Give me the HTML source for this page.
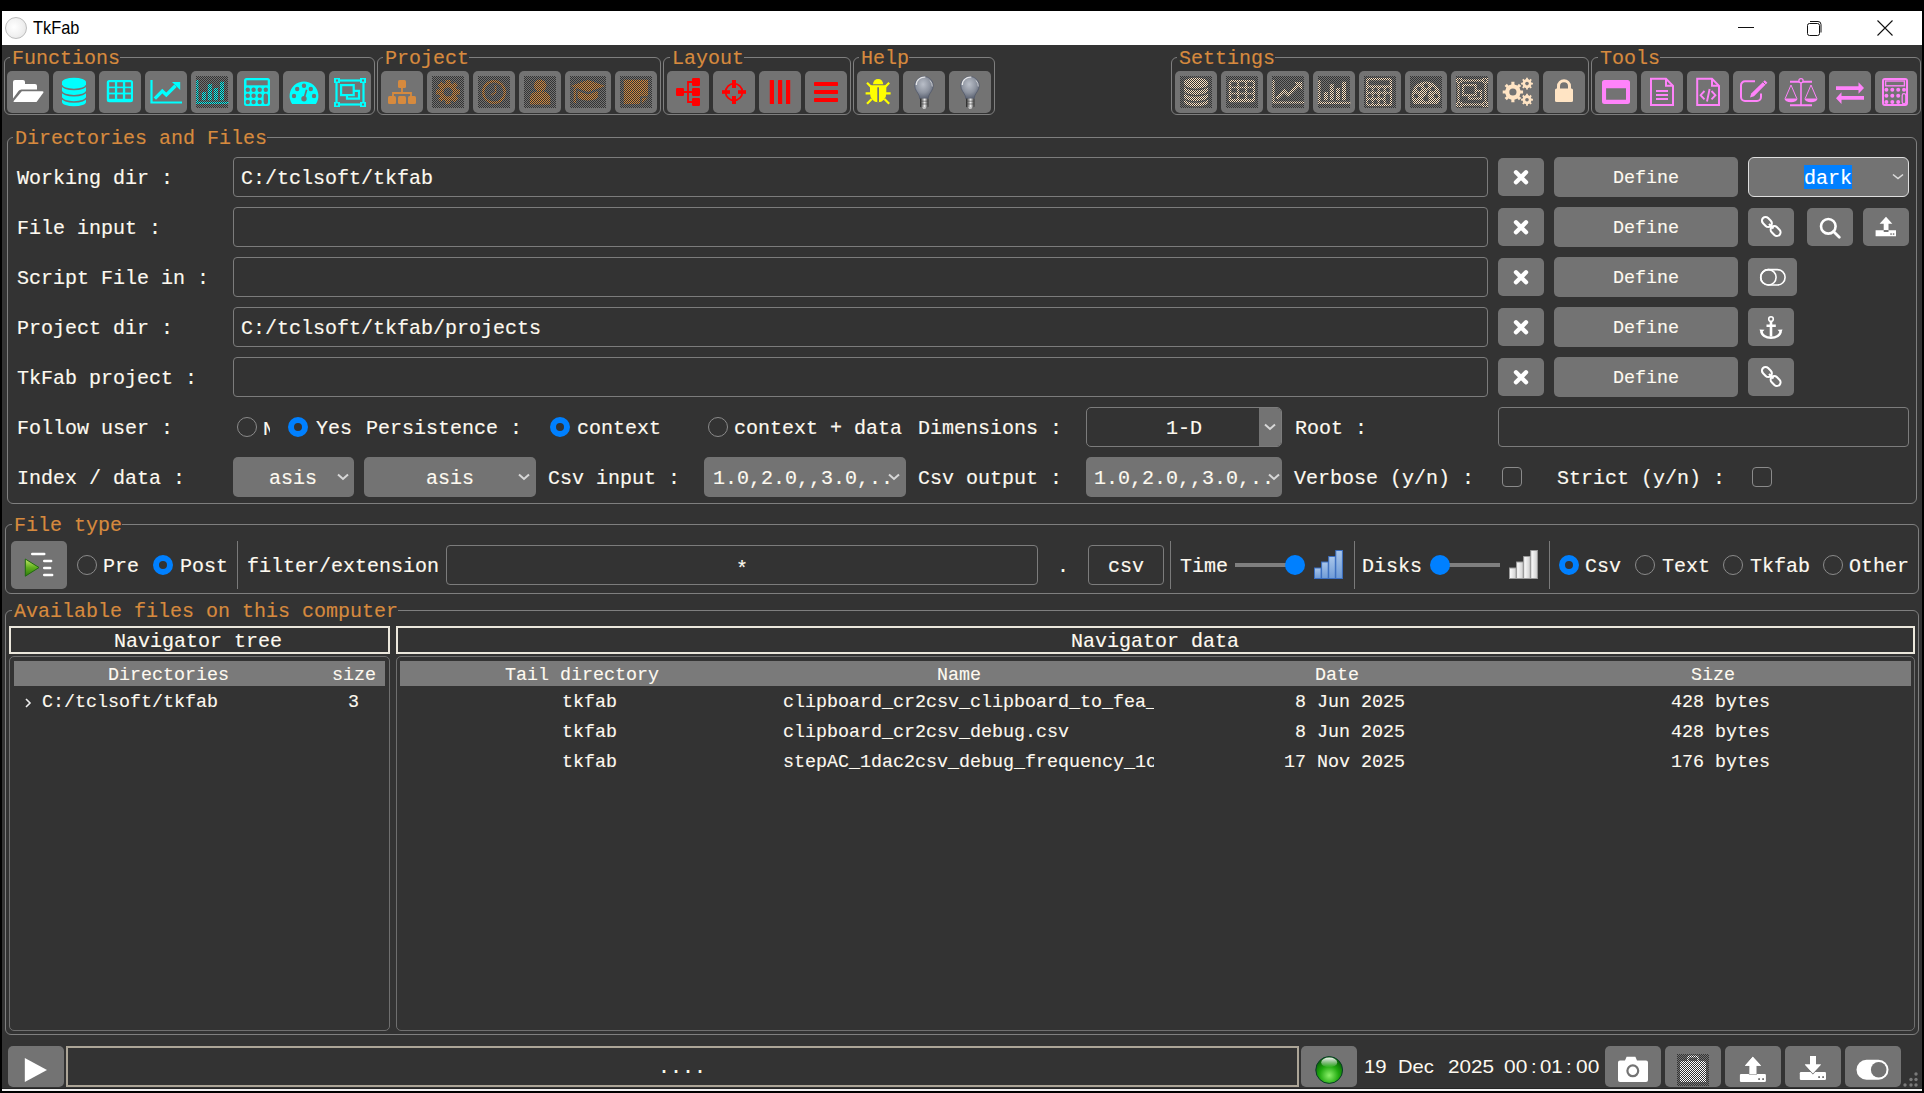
<!DOCTYPE html>
<html><head><meta charset="utf-8">
<style>
*{box-sizing:border-box}
html,body{margin:0;padding:0}
body{width:1924px;height:1093px;background:#000;position:relative;overflow:hidden;font-family:"Liberation Mono",monospace}
.a{position:absolute}
.t{position:absolute;font-size:20px;line-height:20px;color:#fdf9f0;white-space:pre;font-family:"Liberation Mono",monospace;-webkit-text-stroke:0.15px currentColor}
.o{color:#d68a3e;background:#333;padding:0 0 0 2px;margin-left:-2px}
.b{position:absolute;background:#737373;border-radius:5px}
.e{position:absolute;border:1px solid #7c7c7c;border-radius:4px;background:#333}
.f{position:absolute;border:1px solid #7f7f7f;border-radius:6px}
.r{position:absolute;width:20px;height:20px;border-radius:50%;border:1px solid #8a8a8a}
.rs{position:absolute;width:20px;height:20px;border-radius:50%;background:#333;border:6.2px solid #0080ff}
.cb{position:absolute;width:20px;height:20px;border-radius:4px;border:1px solid #8a8a8a}
.sep{position:absolute;width:1px;background:#7a7a7a}
.ic{position:absolute;overflow:visible}
.dis{position:absolute;width:32px;height:32px;background-image:repeating-conic-gradient(#373737 0 25%,transparent 0 50%);background-size:2px 2px}
.tv{position:absolute;font-size:18.33px;line-height:20px;color:#fdf9f0;white-space:pre;font-family:"Liberation Mono",monospace;-webkit-text-stroke:0.12px currentColor}
</style></head><body>
<svg width="0" height="0" style="position:absolute"><defs><pattern id="stip" width="2" height="2" patternUnits="userSpaceOnUse"><rect width="1" height="1" fill="#333"/><rect x="1" y="1" width="1" height="1" fill="#333"/></pattern></defs></svg>
<!-- window -->
<div class="a" style="left:2px;top:11px;width:1920px;height:34px;background:#fff"></div>
<div class="a" style="left:2px;top:45px;width:1920px;height:1046px;background:#333"></div>
<div class="a" style="left:2px;top:1088px;width:1920px;height:1px;background:#262626"></div>
<div class="a" style="left:2px;top:1089px;width:1920px;height:2px;background:#f2f2f2"></div>
<!-- title -->
<div class="a" style="left:5px;top:17px;width:22px;height:22px;border-radius:50%;border:1px solid #bdbdbd;background:radial-gradient(circle at 40% 45%,#fff 0,#f2f2f2 50%,#e0e0e0 100%)"></div>
<div class="a" style="left:33px;top:17px;font:19px/22px 'Liberation Sans',sans-serif;color:#000;transform:scaleX(0.86);transform-origin:0 0">TkFab</div>
<div class="a" style="left:1738px;top:27px;width:16px;height:1px;background:#111"></div>
<svg class="ic" style="left:1805px;top:18px" width="20" height="20" viewBox="0 0 20 20"><rect x="2.5" y="5.5" width="12" height="12" rx="2" fill="none" stroke="#111" stroke-width="1"/><path d="M5 3.5 h8 a3 3 0 0 1 3 3 v8" fill="none" stroke="#111" stroke-width="1"/></svg>
<svg class="ic" style="left:1876px;top:19px" width="18" height="18" viewBox="0 0 18 18"><path d="M1.5 1.5 L16.5 16.5 M16.5 1.5 L1.5 16.5" stroke="#111" stroke-width="1.1"/></svg>

<!-- TOOLBAR FRAMES -->
<div class="f" style="left:4px;top:57px;width:371px;height:58px"></div>
<div class="t o" style="left:12px;top:49px">Functions</div>
<div class="f" style="left:377px;top:57px;width:284px;height:58px"></div>
<div class="t o" style="left:385px;top:49px">Project</div>
<div class="f" style="left:663px;top:57px;width:188px;height:58px"></div>
<div class="t o" style="left:672px;top:49px">Layout</div>
<div class="f" style="left:853px;top:57px;width:142px;height:58px"></div>
<div class="t o" style="left:861px;top:49px">Help</div>
<div class="f" style="left:1171px;top:57px;width:418px;height:58px"></div>
<div class="t o" style="left:1179px;top:49px">Settings</div>
<div class="f" style="left:1591px;top:57px;width:330px;height:58px"></div>
<div class="t o" style="left:1600px;top:49px">Tools</div>
<div class="b" style="left:7px;top:71px;width:42px;height:42px;border-radius:5px"></div><svg class="ic" style="left:7px;top:71px" width="42" height="42" viewBox="0 0 42 42"><path d="M6 11a2 2 0 0 1 2-2h8a2 2 0 0 1 2 2v2h10a2 2 0 0 1 2 2v3.5H14.5a3.5 3.5 0 0 0-3 1.6L6 27.5Z" fill="#ffffff"/><path d="M14.8 20.3H35.5a1 1 0 0 1 .8 1.5L29.5 31H7.2a.7.7 0 0 1-.5-1.1Z" fill="#ffffff"/></svg><div class="b" style="left:53px;top:71px;width:42px;height:42px;border-radius:5px"></div><svg class="ic" style="left:53px;top:71px" width="42" height="42" viewBox="0 0 42 42"><path d="M9 11v19.9a12 4.3 0 0 0 24 0V11a12 4.3 0 0 0-24 0Z" fill="#00ffff"/><path d="M9 14.3a12 4.1 0 0 0 24 0M9 20.6a12 4.1 0 0 0 24 0M9 26.8a12 4.1 0 0 0 24 0" fill="none" stroke="#737373" stroke-width="1.5"/></svg><div class="b" style="left:99px;top:71px;width:42px;height:42px;border-radius:5px"></div><svg class="ic" style="left:99px;top:71px" width="42" height="42" viewBox="0 0 42 42"><rect x="7.8" y="9" width="26.2" height="22.2" rx="2.5" fill="#00ffff"/><rect x="10.2" y="11.2" width="5.7" height="4.4" fill="#737373"/><rect x="18.2" y="11.2" width="5.7" height="4.4" fill="#737373"/><rect x="26.2" y="11.2" width="5.7" height="4.4" fill="#737373"/><rect x="10.2" y="17.2" width="5.7" height="4.4" fill="#737373"/><rect x="18.2" y="17.2" width="5.7" height="4.4" fill="#737373"/><rect x="26.2" y="17.2" width="5.7" height="4.4" fill="#737373"/><rect x="10.2" y="23.4" width="5.7" height="4.4" fill="#737373"/><rect x="18.2" y="23.4" width="5.7" height="4.4" fill="#737373"/><rect x="26.2" y="23.4" width="5.7" height="4.4" fill="#737373"/></svg><div class="b" style="left:145px;top:71px;width:42px;height:42px;border-radius:5px"></div><svg class="ic" style="left:145px;top:71px" width="42" height="42" viewBox="0 0 42 42"><path d="M6.5 9V31.5H37" fill="none" stroke="#00ffff" stroke-width="2.2"/><path d="M9.8 27.6L17.3 20.1l4 3.8l9.2-9.2" fill="none" stroke="#00ffff" stroke-width="3.4"/><path d="M27 10.9H35.2V19.1Z" fill="#00ffff"/></svg><div class="b" style="left:191px;top:71px;width:42px;height:42px;border-radius:5px"></div><svg class="ic" style="left:191px;top:71px" width="42" height="42" viewBox="0 0 42 42"><path d="M6.3 9V31.8H37.2" fill="none" stroke="#00ffff" stroke-width="2.3"/><rect x="10.9" y="21" width="4" height="8.3" fill="#00ffff"/><rect x="16.8" y="13" width="4" height="16.3" fill="#00ffff"/><rect x="22.9" y="17" width="4" height="12.3" fill="#00ffff"/><rect x="29" y="10.8" width="4" height="18.5" fill="#00ffff"/><rect x="5" y="5" width="32" height="32" fill="url(#stip)"/></svg><div class="b" style="left:237px;top:71px;width:42px;height:42px;border-radius:5px"></div><svg class="ic" style="left:237px;top:71px" width="42" height="42" viewBox="0 0 42 42"><rect x="7" y="7" width="26" height="28" rx="2.5" fill="#00ffff"/><rect x="9.5" y="9.3" width="21.2" height="5" fill="#737373"/><circle cx="10.8" cy="18.8" r="2.2" fill="#737373"/><circle cx="16.6" cy="18.8" r="2.2" fill="#737373"/><circle cx="22.7" cy="18.8" r="2.2" fill="#737373"/><circle cx="10.8" cy="24.8" r="2.2" fill="#737373"/><circle cx="16.6" cy="24.8" r="2.2" fill="#737373"/><circle cx="22.7" cy="24.8" r="2.2" fill="#737373"/><circle cx="10.8" cy="31" r="2.2" fill="#737373"/><circle cx="16.6" cy="31" r="2.2" fill="#737373"/><circle cx="22.7" cy="31" r="2.2" fill="#737373"/><circle cx="28.8" cy="18.8" r="2.2" fill="#737373"/><rect x="26.6" y="22.6" width="4.4" height="10.6" rx="2.2" fill="#737373"/></svg><div class="b" style="left:283px;top:71px;width:42px;height:42px;border-radius:5px"></div><svg class="ic" style="left:283px;top:71px" width="42" height="42" viewBox="0 0 42 42"><path d="M9.1 33A14.4 14.4 0 1 1 32.9 33Z" fill="#00ffff"/><circle cx="21" cy="14.8" r="2.2" fill="#737373"/><circle cx="14.2" cy="18" r="2.2" fill="#737373"/><circle cx="27.8" cy="18" r="2.2" fill="#737373"/><circle cx="11" cy="25" r="2.2" fill="#737373"/><circle cx="31" cy="25" r="2.2" fill="#737373"/><circle cx="21" cy="27.8" r="2.7" fill="#737373"/><path d="M21 27.8L23.6 18.8" stroke="#737373" stroke-width="1.7"/></svg><div class="b" style="left:329px;top:71px;width:42px;height:42px;border-radius:5px"></div><svg class="ic" style="left:329px;top:71px" width="42" height="42" viewBox="0 0 42 42"><rect x="7.5" y="9.5" width="27" height="24" fill="none" stroke="#00ffff" stroke-width="2.2"/><rect x="5" y="7" width="6" height="5" fill="#00ffff"/><rect x="7" y="8.5" width="2" height="2" fill="#737373"/><rect x="31" y="7" width="6" height="5" fill="#00ffff"/><rect x="33" y="8.5" width="2" height="2" fill="#737373"/><rect x="5" y="31" width="6" height="5" fill="#00ffff"/><rect x="7" y="32.5" width="2" height="2" fill="#737373"/><rect x="31" y="31" width="6" height="5" fill="#00ffff"/><rect x="33" y="32.5" width="2" height="2" fill="#737373"/><rect x="12.1" y="14.1" width="12.6" height="10" fill="none" stroke="#00ffff" stroke-width="2.2"/><path d="M24.7 19.9H30V27.6H18V24.1" fill="none" stroke="#00ffff" stroke-width="2.2"/></svg><div class="b" style="left:381px;top:71px;width:42px;height:42px;border-radius:5px"></div><svg class="ic" style="left:381px;top:71px" width="42" height="42" viewBox="0 0 42 42"><rect x="17" y="9" width="8" height="8" rx="1.5" fill="#d68a3e"/><path d="M21 17v5.5M12 25v-3h18v3" fill="none" stroke="#d68a3e" stroke-width="1.8"/><rect x="7" y="25" width="8" height="8" rx="1.5" fill="#d68a3e"/><rect x="17" y="25" width="8" height="8" rx="1.5" fill="#d68a3e"/><rect x="27" y="25" width="8" height="8" rx="1.5" fill="#d68a3e"/></svg><div class="b" style="left:427px;top:71px;width:42px;height:42px;border-radius:5px"></div><svg class="ic" style="left:427px;top:71px" width="42" height="42" viewBox="0 0 42 42"><path d="M29.71 18.62 L32.92 18.41 L32.92 23.59 L29.71 23.38 L28.84 25.47 L31.26 27.60 L27.60 31.26 L25.47 28.84 L23.38 29.71 L23.59 32.92 L18.41 32.92 L18.62 29.71 L16.53 28.84 L14.40 31.26 L10.74 27.60 L13.16 25.47 L12.29 23.38 L9.08 23.59 L9.08 18.41 L12.29 18.62 L13.16 16.53 L10.74 14.40 L14.40 10.74 L16.53 13.16 L18.62 12.29 L18.41 9.08 L23.59 9.08 L23.38 12.29 L25.47 13.16 L27.60 10.74 L31.26 14.40 L28.84 16.53Z" fill="#d68a3e"/><circle cx="21" cy="21" r="9.027999999999999" fill="#d68a3e"/><circle cx="21" cy="21" r="4.6" fill="#737373"/><rect x="5" y="5" width="32" height="32" fill="url(#stip)"/></svg><div class="b" style="left:473px;top:71px;width:42px;height:42px;border-radius:5px"></div><svg class="ic" style="left:473px;top:71px" width="42" height="42" viewBox="0 0 42 42"><circle cx="21" cy="21" r="10.8" fill="none" stroke="#d68a3e" stroke-width="2.4"/><path d="M22.5 14V21.5L18.5 24" fill="none" stroke="#d68a3e" stroke-width="1.6"/><rect x="5" y="5" width="32" height="32" fill="url(#stip)"/></svg><div class="b" style="left:519px;top:71px;width:42px;height:42px;border-radius:5px"></div><svg class="ic" style="left:519px;top:71px" width="42" height="42" viewBox="0 0 42 42"><circle cx="21.1" cy="14.6" r="6.2" fill="#d68a3e"/><path d="M10.9 33.4V27.5a7 7 0 0 1 7-7h6.4a7 7 0 0 1 7 7V33.4Z" fill="#d68a3e"/><rect x="5" y="5" width="32" height="32" fill="url(#stip)"/></svg><div class="b" style="left:565px;top:71px;width:46px;height:42px;border-radius:5px"></div><svg class="ic" style="left:565px;top:71px" width="46" height="42" viewBox="0 0 46 42"><path d="M5.5 15L23 9L40.5 15L23 21Z" fill="#d68a3e"/><path d="M12.7 20v6.5c2 2 6 3 10.2 3s8.2-1 10-3V20L23 23.5Z" fill="#d68a3e"/><path d="M9.8 17V32" stroke="#d68a3e" stroke-width="2.2"/><rect x="5" y="5" width="36" height="32" fill="url(#stip)"/></svg><div class="b" style="left:615px;top:71px;width:42px;height:42px;border-radius:5px"></div><svg class="ic" style="left:615px;top:71px" width="42" height="42" viewBox="0 0 42 42"><path d="M8.8 8.8H33V25.3H25V33H8.8Z" fill="#d68a3e"/><path d="M26.8 26.8H33L26.8 33Z" fill="#d68a3e"/><rect x="5" y="5" width="32" height="32" fill="url(#stip)"/></svg><div class="b" style="left:667px;top:71px;width:42px;height:42px;border-radius:5px"></div><svg class="ic" style="left:667px;top:71px" width="42" height="42" viewBox="0 0 42 42"><rect x="9" y="17" width="8" height="8" rx="1.2" fill="#ff0000"/><path d="M17 21H25M28 11H21V31H28" fill="none" stroke="#ff0000" stroke-width="1.8"/><rect x="25" y="7" width="8" height="8" rx="1.2" fill="#ff0000"/><rect x="25" y="17" width="8" height="8" rx="1.2" fill="#ff0000"/><rect x="25" y="27" width="8" height="8" rx="1.2" fill="#ff0000"/></svg><div class="b" style="left:713px;top:71px;width:42px;height:42px;border-radius:5px"></div><svg class="ic" style="left:713px;top:71px" width="42" height="42" viewBox="0 0 42 42"><circle cx="21" cy="21" r="8.4" fill="none" stroke="#ff0000" stroke-width="1.8"/><rect x="19" y="9" width="4" height="8" fill="#ff0000"/><rect x="19" y="25" width="4" height="8" fill="#ff0000"/><rect x="9" y="19.2" width="8" height="3.6" fill="#ff0000"/><rect x="25" y="19.2" width="8" height="3.6" fill="#ff0000"/></svg><div class="b" style="left:759px;top:71px;width:42px;height:42px;border-radius:5px"></div><svg class="ic" style="left:759px;top:71px" width="42" height="42" viewBox="0 0 42 42"><rect x="10.8" y="9" width="4.2" height="24" rx=".5" fill="#ff0000"/><rect x="19" y="9" width="4.2" height="24" rx=".5" fill="#ff0000"/><rect x="27" y="9" width="4.2" height="24" rx=".5" fill="#ff0000"/></svg><div class="b" style="left:805px;top:71px;width:42px;height:42px;border-radius:5px"></div><svg class="ic" style="left:805px;top:71px" width="42" height="42" viewBox="0 0 42 42"><rect x="9" y="11" width="24" height="4" rx=".8" fill="#ff0000"/><rect x="9" y="19" width="24" height="4" rx=".8" fill="#ff0000"/><rect x="9" y="27" width="24" height="4" rx=".8" fill="#ff0000"/></svg><div class="b" style="left:857px;top:71px;width:42px;height:42px;border-radius:5px"></div><svg class="ic" style="left:857px;top:71px" width="42" height="42" viewBox="0 0 42 42"><path d="M16 13.2a5.1 5.1 0 0 1 10.2 0Z" fill="#ffff00"/><path d="M13 14.3H29.3V22.5a8.15 8.8 0 0 1-16.3 0Z" fill="#ffff00"/><rect x="20.3" y="16.3" width="1.7" height="15" fill="#737373"/><path d="M8.6 22.3H13.5M28.8 22.3H33.6M10 11.8L14.6 16.4M32.2 11.8L27.6 16.4M10 32.8L14.8 28M32.2 32.8L27.4 28" stroke="#ffff00" stroke-width="2.2"/></svg><div class="b" style="left:903px;top:71px;width:42px;height:42px;border-radius:5px"></div><svg class="ic" style="left:903px;top:71px" width="42" height="42" viewBox="0 0 42 42"><defs><radialGradient id="bg1" cx="45%" cy="35%" r="65%"><stop offset="0" stop-color="#b9bec8"/><stop offset=".6" stop-color="#8d939f"/><stop offset="1" stop-color="#5d6474"/></radialGradient><linearGradient id="bb1" x1="0" x2="1"><stop offset="0" stop-color="#1a1a1a"/><stop offset=".55" stop-color="#f0f0f0"/><stop offset="1" stop-color="#2a2a2a"/></linearGradient></defs><path d="M21 5.6c-5.1 0-9.2 4-9.2 9.2c0 4.3 3.2 6.8 4.3 9.8c.4 1.1.6 2.1.6 3h8.6c0-.9.2-1.9.6-3c1.1-3 4.3-5.5 4.3-9.8c0-5.2-4.1-9.2-9.2-9.2Z" fill="url(#bg1)" stroke="#4f5668" stroke-width=".7"/><path d="M13.3 14a8 7.5 0 0 1 9-7.8" fill="none" stroke="#f4f4f4" stroke-width="1.3" opacity=".85"/><path d="M27 9.5a8 8 0 0 1 2.3 6" fill="none" stroke="#e8e8e8" stroke-width="1" opacity=".7"/><rect x="17" y="27.6" width="8.4" height="8.6" rx=".8" fill="url(#bb1)"/><path d="M17.2 30.2H25.2M17.2 33H25.2" stroke="#444" stroke-width=".6"/><path d="M19.2 36.2h4l-.8 1.6h-2.4Z" fill="#d8d8d8"/></svg><div class="b" style="left:949px;top:71px;width:42px;height:42px;border-radius:5px"></div><svg class="ic" style="left:949px;top:71px" width="42" height="42" viewBox="0 0 42 42"><defs><radialGradient id="bg2" cx="45%" cy="35%" r="65%"><stop offset="0" stop-color="#b9bec8"/><stop offset=".6" stop-color="#8d939f"/><stop offset="1" stop-color="#5d6474"/></radialGradient><linearGradient id="bb2" x1="0" x2="1"><stop offset="0" stop-color="#1a1a1a"/><stop offset=".55" stop-color="#f0f0f0"/><stop offset="1" stop-color="#2a2a2a"/></linearGradient></defs><path d="M21 5.6c-5.1 0-9.2 4-9.2 9.2c0 4.3 3.2 6.8 4.3 9.8c.4 1.1.6 2.1.6 3h8.6c0-.9.2-1.9.6-3c1.1-3 4.3-5.5 4.3-9.8c0-5.2-4.1-9.2-9.2-9.2Z" fill="url(#bg2)" stroke="#4f5668" stroke-width=".7"/><path d="M13.3 14a8 7.5 0 0 1 9-7.8" fill="none" stroke="#f4f4f4" stroke-width="1.3" opacity=".85"/><path d="M27 9.5a8 8 0 0 1 2.3 6" fill="none" stroke="#e8e8e8" stroke-width="1" opacity=".7"/><rect x="17" y="27.6" width="8.4" height="8.6" rx=".8" fill="url(#bb2)"/><path d="M17.2 30.2H25.2M17.2 33H25.2" stroke="#444" stroke-width=".6"/><path d="M19.2 36.2h4l-.8 1.6h-2.4Z" fill="#d8d8d8"/></svg><div class="b" style="left:1175px;top:71px;width:42px;height:42px;border-radius:5px"></div><svg class="ic" style="left:1175px;top:71px" width="42" height="42" viewBox="0 0 42 42"><path d="M9 11v19.9a12 4.3 0 0 0 24 0V11a12 4.3 0 0 0-24 0Z" fill="#ffe4c4"/><path d="M9 14.3a12 4.1 0 0 0 24 0M9 20.6a12 4.1 0 0 0 24 0M9 26.8a12 4.1 0 0 0 24 0" fill="none" stroke="#737373" stroke-width="1.5"/><rect x="5" y="5" width="32" height="32" fill="url(#stip)"/></svg><div class="b" style="left:1221px;top:71px;width:42px;height:42px;border-radius:5px"></div><svg class="ic" style="left:1221px;top:71px" width="42" height="42" viewBox="0 0 42 42"><rect x="7.8" y="9" width="26.2" height="22.2" rx="2.5" fill="#ffe4c4"/><rect x="10.2" y="11.2" width="5.7" height="4.4" fill="#737373"/><rect x="18.2" y="11.2" width="5.7" height="4.4" fill="#737373"/><rect x="26.2" y="11.2" width="5.7" height="4.4" fill="#737373"/><rect x="10.2" y="17.2" width="5.7" height="4.4" fill="#737373"/><rect x="18.2" y="17.2" width="5.7" height="4.4" fill="#737373"/><rect x="26.2" y="17.2" width="5.7" height="4.4" fill="#737373"/><rect x="10.2" y="23.4" width="5.7" height="4.4" fill="#737373"/><rect x="18.2" y="23.4" width="5.7" height="4.4" fill="#737373"/><rect x="26.2" y="23.4" width="5.7" height="4.4" fill="#737373"/><rect x="5" y="5" width="32" height="32" fill="url(#stip)"/></svg><div class="b" style="left:1267px;top:71px;width:42px;height:42px;border-radius:5px"></div><svg class="ic" style="left:1267px;top:71px" width="42" height="42" viewBox="0 0 42 42"><path d="M6.5 9V31.5H37" fill="none" stroke="#ffe4c4" stroke-width="2.2"/><path d="M9.8 27.6L17.3 20.1l4 3.8l9.2-9.2" fill="none" stroke="#ffe4c4" stroke-width="3.4"/><path d="M27 10.9H35.2V19.1Z" fill="#ffe4c4"/><rect x="5" y="5" width="32" height="32" fill="url(#stip)"/></svg><div class="b" style="left:1313px;top:71px;width:42px;height:42px;border-radius:5px"></div><svg class="ic" style="left:1313px;top:71px" width="42" height="42" viewBox="0 0 42 42"><path d="M6.3 9V31.8H37.2" fill="none" stroke="#ffe4c4" stroke-width="2.3"/><rect x="10.9" y="21" width="4" height="8.3" fill="#ffe4c4"/><rect x="16.8" y="13" width="4" height="16.3" fill="#ffe4c4"/><rect x="22.9" y="17" width="4" height="12.3" fill="#ffe4c4"/><rect x="29" y="10.8" width="4" height="18.5" fill="#ffe4c4"/><rect x="5" y="5" width="32" height="32" fill="url(#stip)"/></svg><div class="b" style="left:1359px;top:71px;width:42px;height:42px;border-radius:5px"></div><svg class="ic" style="left:1359px;top:71px" width="42" height="42" viewBox="0 0 42 42"><rect x="7" y="7" width="26" height="28" rx="2.5" fill="#ffe4c4"/><rect x="9.5" y="9.3" width="21.2" height="5" fill="#737373"/><circle cx="10.8" cy="18.8" r="2.2" fill="#737373"/><circle cx="16.6" cy="18.8" r="2.2" fill="#737373"/><circle cx="22.7" cy="18.8" r="2.2" fill="#737373"/><circle cx="10.8" cy="24.8" r="2.2" fill="#737373"/><circle cx="16.6" cy="24.8" r="2.2" fill="#737373"/><circle cx="22.7" cy="24.8" r="2.2" fill="#737373"/><circle cx="10.8" cy="31" r="2.2" fill="#737373"/><circle cx="16.6" cy="31" r="2.2" fill="#737373"/><circle cx="22.7" cy="31" r="2.2" fill="#737373"/><circle cx="28.8" cy="18.8" r="2.2" fill="#737373"/><rect x="26.6" y="22.6" width="4.4" height="10.6" rx="2.2" fill="#737373"/><rect x="5" y="5" width="32" height="32" fill="url(#stip)"/></svg><div class="b" style="left:1405px;top:71px;width:42px;height:42px;border-radius:5px"></div><svg class="ic" style="left:1405px;top:71px" width="42" height="42" viewBox="0 0 42 42"><path d="M9.1 33A14.4 14.4 0 1 1 32.9 33Z" fill="#ffe4c4"/><circle cx="21" cy="14.8" r="2.2" fill="#737373"/><circle cx="14.2" cy="18" r="2.2" fill="#737373"/><circle cx="27.8" cy="18" r="2.2" fill="#737373"/><circle cx="11" cy="25" r="2.2" fill="#737373"/><circle cx="31" cy="25" r="2.2" fill="#737373"/><circle cx="21" cy="27.8" r="2.7" fill="#737373"/><path d="M21 27.8L23.6 18.8" stroke="#737373" stroke-width="1.7"/><rect x="5" y="5" width="32" height="32" fill="url(#stip)"/></svg><div class="b" style="left:1451px;top:71px;width:42px;height:42px;border-radius:5px"></div><svg class="ic" style="left:1451px;top:71px" width="42" height="42" viewBox="0 0 42 42"><rect x="7.5" y="9.5" width="27" height="24" fill="none" stroke="#ffe4c4" stroke-width="2.2"/><rect x="5" y="7" width="6" height="5" fill="#ffe4c4"/><rect x="7" y="8.5" width="2" height="2" fill="#737373"/><rect x="31" y="7" width="6" height="5" fill="#ffe4c4"/><rect x="33" y="8.5" width="2" height="2" fill="#737373"/><rect x="5" y="31" width="6" height="5" fill="#ffe4c4"/><rect x="7" y="32.5" width="2" height="2" fill="#737373"/><rect x="31" y="31" width="6" height="5" fill="#ffe4c4"/><rect x="33" y="32.5" width="2" height="2" fill="#737373"/><rect x="12.1" y="14.1" width="12.6" height="10" fill="none" stroke="#ffe4c4" stroke-width="2.2"/><path d="M24.7 19.9H30V27.6H18V24.1" fill="none" stroke="#ffe4c4" stroke-width="2.2"/><rect x="5" y="5" width="32" height="32" fill="url(#stip)"/></svg><div class="b" style="left:1497px;top:71px;width:42px;height:42px;border-radius:5px"></div><svg class="ic" style="left:1497px;top:71px" width="42" height="42" viewBox="0 0 42 42"><path d="M23.38 19.51 L26.07 19.39 L26.07 22.61 L23.38 22.49 L22.24 25.23 L24.23 27.05 L21.95 29.33 L20.13 27.34 L17.39 28.48 L17.51 31.17 L14.29 31.17 L14.41 28.48 L11.67 27.34 L9.85 29.33 L7.57 27.05 L9.56 25.23 L8.42 22.49 L5.73 22.61 L5.73 19.39 L8.42 19.51 L9.56 16.77 L7.57 14.95 L9.85 12.67 L11.67 14.66 L14.41 13.52 L14.29 10.83 L17.51 10.83 L17.39 13.52 L20.13 14.66 L21.95 12.67 L24.23 14.95 L22.24 16.77Z" fill="#ffe4c4"/><circle cx="15.9" cy="21" r="7.622000000000001" fill="#ffe4c4"/><circle cx="15.9" cy="21" r="3.6" fill="#737373"/><path d="M34.35 11.73 L35.93 11.66 L35.93 13.54 L34.35 13.47 L33.69 15.07 L34.85 16.13 L33.53 17.45 L32.47 16.29 L30.87 16.95 L30.94 18.53 L29.06 18.53 L29.13 16.95 L27.53 16.29 L26.47 17.45 L25.15 16.13 L26.31 15.07 L25.65 13.47 L24.07 13.54 L24.07 11.66 L25.65 11.73 L26.31 10.13 L25.15 9.07 L26.47 7.75 L27.53 8.91 L29.13 8.25 L29.06 6.67 L30.94 6.67 L30.87 8.25 L32.47 8.91 L33.53 7.75 L34.85 9.07 L33.69 10.13Z" fill="#ffe4c4"/><circle cx="30" cy="12.6" r="4.4399999999999995" fill="#ffe4c4"/><circle cx="30" cy="12.6" r="1.8" fill="#737373"/><path d="M34.35 27.83 L35.93 27.76 L35.93 29.64 L34.35 29.57 L33.69 31.17 L34.85 32.23 L33.53 33.55 L32.47 32.39 L30.87 33.05 L30.94 34.63 L29.06 34.63 L29.13 33.05 L27.53 32.39 L26.47 33.55 L25.15 32.23 L26.31 31.17 L25.65 29.57 L24.07 29.64 L24.07 27.76 L25.65 27.83 L26.31 26.23 L25.15 25.17 L26.47 23.85 L27.53 25.01 L29.13 24.35 L29.06 22.77 L30.94 22.77 L30.87 24.35 L32.47 25.01 L33.53 23.85 L34.85 25.17 L33.69 26.23Z" fill="#ffe4c4"/><circle cx="30" cy="28.7" r="4.4399999999999995" fill="#ffe4c4"/><circle cx="30" cy="28.7" r="1.8" fill="#737373"/></svg><div class="b" style="left:1543px;top:71px;width:42px;height:42px;border-radius:5px"></div><svg class="ic" style="left:1543px;top:71px" width="42" height="42" viewBox="0 0 42 42"><path d="M15.5 18.5v-3.3a5.5 5.5 0 0 1 11 0v3.3" fill="none" stroke="#ffe4c4" stroke-width="3"/><rect x="12" y="17.5" width="18" height="13.5" rx="1.5" fill="#ffe4c4"/></svg><div class="b" style="left:1595px;top:71px;width:42px;height:42px;border-radius:5px"></div><svg class="ic" style="left:1595px;top:71px" width="42" height="42" viewBox="0 0 42 42"><path fill-rule="evenodd" d="M9.5 9H32.5A2.5 2.5 0 0 1 35 11.5V30.5A2.5 2.5 0 0 1 32.5 33H9.5A2.5 2.5 0 0 1 7 30.5V11.5A2.5 2.5 0 0 1 9.5 9ZM11.1 17.2V28.8H31V17.2Z" fill="#ff83fa"/></svg><div class="b" style="left:1641px;top:71px;width:42px;height:42px;border-radius:5px"></div><svg class="ic" style="left:1641px;top:71px" width="42" height="42" viewBox="0 0 42 42"><path d="M10 7.8H25L32 14.8V34H10Z" fill="none" stroke="#ff83fa" stroke-width="2"/><path d="M25 7.8V14.8H32" fill="none" stroke="#ff83fa" stroke-width="2"/><path d="M15 20H27M15 24H27M15 28H27" stroke="#ff83fa" stroke-width="1.9"/></svg><div class="b" style="left:1687px;top:71px;width:42px;height:42px;border-radius:5px"></div><svg class="ic" style="left:1687px;top:71px" width="42" height="42" viewBox="0 0 42 42"><path d="M10.2 7.8H25L32 14.8V34H10.2Z" fill="none" stroke="#ff83fa" stroke-width="2"/><path d="M25 7.8V14.8H32" fill="none" stroke="#ff83fa" stroke-width="2"/><path d="M17.5 20L13.6 24.2L17.5 28.4M24.5 20L28.4 24.2L24.5 28.4M22.6 18L20 30.5" fill="none" stroke="#ff83fa" stroke-width="1.9"/></svg><div class="b" style="left:1733px;top:71px;width:42px;height:42px;border-radius:5px"></div><svg class="ic" style="left:1733px;top:71px" width="42" height="42" viewBox="0 0 42 42"><path d="M22 10.3H12a4 4 0 0 0-4 4V26a4 4 0 0 0 4 4h12a4 4 0 0 0 4-4v-3.5" fill="none" stroke="#ff83fa" stroke-width="2"/><path d="M31.8 9.2l2.6 2.6L21 25.2l-4 1.2l1.2-4Z" fill="#ff83fa"/><path d="M30 11l2.6 2.6" stroke="#737373" stroke-width=".9"/></svg><div class="b" style="left:1779px;top:71px;width:46px;height:42px;border-radius:5px"></div><svg class="ic" style="left:1779px;top:71px" width="46" height="42" viewBox="0 0 46 42"><path d="M11 10.8H33M11 34.3H33" stroke="#ff83fa" stroke-width="2"/><circle cx="22" cy="9.8" r="2.1" fill="#737373" stroke="#ff83fa" stroke-width="1.3"/><path d="M22 12V34" stroke="#ff83fa" stroke-width="1.6"/><path d="M6.2 27.5L12 14L17.8 27.5M26.2 27.5L32 14L37.8 27.5" fill="none" stroke="#ff83fa" stroke-width="1"/><path d="M5.5 27.5H18.5A6.5 3.8 0 0 1 5.5 27.5ZM25.5 27.5H38.5A6.5 3.8 0 0 1 25.5 27.5Z" fill="#ff83fa"/></svg><div class="b" style="left:1829px;top:71px;width:42px;height:42px;border-radius:5px"></div><svg class="ic" style="left:1829px;top:71px" width="42" height="42" viewBox="0 0 42 42"><path d="M7 15.3H29.5V11.3L35 17.1L29.5 22.8V18.9H7Z" fill="#ff83fa"/><path d="M35 25H12.5V21.3L7 27.2L12.5 33V28.8H35Z" fill="#ff83fa"/></svg><div class="b" style="left:1875px;top:71px;width:42px;height:42px;border-radius:5px"></div><svg class="ic" style="left:1875px;top:71px" width="42" height="42" viewBox="0 0 42 42"><rect x="8" y="7.9" width="24" height="26" rx="2" fill="none" stroke="#ff83fa" stroke-width="2"/><rect x="10.6" y="10" width="18.8" height="4.8" fill="none" stroke="#ff83fa" stroke-width="1.4"/><circle cx="11.4" cy="18.7" r="2" fill="#ff83fa"/><circle cx="17.3" cy="18.7" r="2" fill="#ff83fa"/><circle cx="23.2" cy="18.7" r="2" fill="#ff83fa"/><circle cx="11.4" cy="24.8" r="2" fill="#ff83fa"/><circle cx="17.3" cy="24.8" r="2" fill="#ff83fa"/><circle cx="23.2" cy="24.8" r="2" fill="#ff83fa"/><circle cx="11.4" cy="30.9" r="2" fill="#ff83fa"/><circle cx="17.3" cy="30.9" r="2" fill="#ff83fa"/><circle cx="23.2" cy="30.9" r="2" fill="#ff83fa"/><circle cx="29" cy="18.7" r="2" fill="#ff83fa"/><rect x="27.2" y="22.6" width="3.6" height="10.2" rx="1.8" fill="none" stroke="#ff83fa" stroke-width="1.3"/></svg>

<!-- DIRECTORIES AND FILES -->
<div class="f" style="left:7px;top:137px;width:1910px;height:367px"></div>
<div class="t o" style="left:15px;top:129px">Directories and Files</div>
<div class="t" style="left:17px;top:169px;">Working dir :</div><div class="e" style="left:233px;top:157px;width:1255px;height:40px"></div><div class="t" style="left:241px;top:169px;">C:/tclsoft/tkfab</div><div class="b" style="left:1498px;top:158px;width:46px;height:38px;border-radius:5px"></div><svg class="ic" style="left:1498px;top:158px" width="46" height="38" viewBox="0 0 46 38"><path d="M18 14.3L28 24.3M28 14.3L18 24.3" stroke="#fff" stroke-width="4.4" stroke-linecap="round"/></svg><div class="b" style="left:1554px;top:157px;width:184px;height:40px"></div><div class="tv" style="left:1613px;top:169px;">Define</div><div class="t" style="left:17px;top:219px;">File input :</div><div class="e" style="left:233px;top:207px;width:1255px;height:40px"></div><div class="b" style="left:1498px;top:208px;width:46px;height:38px;border-radius:5px"></div><svg class="ic" style="left:1498px;top:208px" width="46" height="38" viewBox="0 0 46 38"><path d="M18 14.3L28 24.3M28 14.3L18 24.3" stroke="#fff" stroke-width="4.4" stroke-linecap="round"/></svg><div class="b" style="left:1554px;top:207px;width:184px;height:40px"></div><div class="tv" style="left:1613px;top:219px;">Define</div><div class="t" style="left:17px;top:269px;">Script File in :</div><div class="e" style="left:233px;top:257px;width:1255px;height:40px"></div><div class="b" style="left:1498px;top:258px;width:46px;height:38px;border-radius:5px"></div><svg class="ic" style="left:1498px;top:258px" width="46" height="38" viewBox="0 0 46 38"><path d="M18 14.3L28 24.3M28 14.3L18 24.3" stroke="#fff" stroke-width="4.4" stroke-linecap="round"/></svg><div class="b" style="left:1554px;top:257px;width:184px;height:40px"></div><div class="tv" style="left:1613px;top:269px;">Define</div><div class="t" style="left:17px;top:319px;">Project dir :</div><div class="e" style="left:233px;top:307px;width:1255px;height:40px"></div><div class="t" style="left:241px;top:319px;">C:/tclsoft/tkfab/projects</div><div class="b" style="left:1498px;top:308px;width:46px;height:38px;border-radius:5px"></div><svg class="ic" style="left:1498px;top:308px" width="46" height="38" viewBox="0 0 46 38"><path d="M18 14.3L28 24.3M28 14.3L18 24.3" stroke="#fff" stroke-width="4.4" stroke-linecap="round"/></svg><div class="b" style="left:1554px;top:307px;width:184px;height:40px"></div><div class="tv" style="left:1613px;top:319px;">Define</div><div class="t" style="left:17px;top:369px;">TkFab project :</div><div class="e" style="left:233px;top:357px;width:1255px;height:40px"></div><div class="b" style="left:1498px;top:358px;width:46px;height:38px;border-radius:5px"></div><svg class="ic" style="left:1498px;top:358px" width="46" height="38" viewBox="0 0 46 38"><path d="M18 14.3L28 24.3M28 14.3L18 24.3" stroke="#fff" stroke-width="4.4" stroke-linecap="round"/></svg><div class="b" style="left:1554px;top:357px;width:184px;height:40px"></div><div class="tv" style="left:1613px;top:369px;">Define</div><div class="a" style="left:1748px;top:157px;width:161px;height:40px;border:1.5px solid #dedede;border-radius:6px;background:#737373"></div><div class="a" style="left:1804px;top:165px;width:48px;height:24px;background:#0080ff"></div><div class="t" style="left:1804px;top:169px;color:#fff">dark</div><svg class="ic" style="left:1890px;top:170px" width="16" height="12" viewBox="0 0 16 12"><path d="M3 4.5L8 8.5L13 4.5" fill="none" stroke="#dcdcdc" stroke-width="1.6"/></svg><div class="b" style="left:1748px;top:208px;width:46px;height:38px;border-radius:5px"></div><svg class="ic" style="left:1748px;top:208px" width="46" height="38" viewBox="0 0 46 38"><g fill="none" stroke="#fff" stroke-width="2.1" transform="translate(2 -0.8)"><rect x="13.3" y="9.3" width="7.2" height="11" rx="3.6" transform="rotate(-45 16.9 14.8)"/><rect x="22" y="18.3" width="7.2" height="11" rx="3.6" transform="rotate(-45 25.6 23.8)"/><path d="M19 16.9L23.5 21.4"/></g></svg><div class="b" style="left:1807px;top:208px;width:46px;height:38px;border-radius:5px"></div><svg class="ic" style="left:1807px;top:208px" width="46" height="38" viewBox="0 0 46 38"><circle cx="21.3" cy="18.3" r="7.3" fill="none" stroke="#fff" stroke-width="2.6"/><path d="M26.5 23.5L32.3 29.3" stroke="#fff" stroke-width="2.8" stroke-linecap="round"/></svg><div class="b" style="left:1863px;top:208px;width:46px;height:38px;border-radius:5px"></div><svg class="ic" style="left:1863px;top:208px" width="46" height="38" viewBox="0 0 46 38"><path d="M23 8.7L29.3 15.7H25.5V22H20.7V15.7H16.6Z" fill="#fff"/><path d="M12.6 22.2H20.7V24H25.5V22.2H33V28.3H12.6Z" fill="#fff"/><rect x="27.3" y="25.3" width="1.5" height="1.5" fill="#737373"/><rect x="29.8" y="25.3" width="1.5" height="1.5" fill="#737373"/></svg><div class="b" style="left:1748px;top:258px;width:49px;height:38px;border-radius:5px"></div><svg class="ic" style="left:1748px;top:258px" width="49" height="38" viewBox="0 0 49 38"><rect x="12.7" y="11.6" width="24.4" height="15.4" rx="7.7" fill="none" stroke="#fff" stroke-width="1.6"/><circle cx="20.4" cy="19.3" r="7.7" fill="none" stroke="#fff" stroke-width="1.6"/></svg><div class="b" style="left:1748px;top:308px;width:46px;height:38px;border-radius:5px"></div><svg class="ic" style="left:1748px;top:308px" width="46" height="38" viewBox="0 0 46 38"><circle cx="23" cy="11" r="2.3" fill="none" stroke="#fff" stroke-width="1.6"/><path d="M23 13.3V28.5M18.5 17.7H27.8" stroke="#fff" stroke-width="2.6"/><path d="M13.5 23.5a9.5 6.2 0 0 0 19 0" fill="none" stroke="#fff" stroke-width="2.4"/><path d="M11.5 21.5L16.5 21.8L13 25.5Z M34.5 21.5L29.5 21.8L33 25.5Z" fill="#fff"/></svg><div class="b" style="left:1748px;top:358px;width:46px;height:38px;border-radius:5px"></div><svg class="ic" style="left:1748px;top:358px" width="46" height="38" viewBox="0 0 46 38"><g fill="none" stroke="#fff" stroke-width="2.1" transform="translate(2 -0.8)"><rect x="13.3" y="9.3" width="7.2" height="11" rx="3.6" transform="rotate(-45 16.9 14.8)"/><rect x="22" y="18.3" width="7.2" height="11" rx="3.6" transform="rotate(-45 25.6 23.8)"/><path d="M19 16.9L23.5 21.4"/></g></svg><div class="t" style="left:17px;top:419px;">Follow user :</div><div class="r" style="left:237px;top:417px"></div><div class="t" style="left:263px;top:420px;width:7px;overflow:hidden">N</div><div class="rs" style="left:288px;top:417px"></div><div class="t" style="left:316px;top:419px;">Yes</div><div class="t" style="left:366px;top:419px;">Persistence :</div><div class="rs" style="left:550px;top:417px"></div><div class="t" style="left:577px;top:419px;">context</div><div class="r" style="left:708px;top:417px"></div><div class="t" style="left:734px;top:419px;">context + data</div><div class="t" style="left:918px;top:419px;">Dimensions :</div><div class="a" style="left:1086px;top:407px;width:196px;height:40px;border:1px solid #7c7c7c;border-radius:5px;background:#333;overflow:hidden"><div class="a" style="left:172px;top:0;width:24px;height:40px;background:#737373"></div></div><div class="t" style="left:1166px;top:419px;">1-D</div><svg class="ic" style="left:1262px;top:421px" width="16" height="12" viewBox="0 0 16 12"><path d="M3 3.5L8 8L13 3.5" fill="none" stroke="#d8d8d8" stroke-width="2"/></svg><div class="t" style="left:1295px;top:419px;">Root :</div><div class="e" style="left:1498px;top:407px;width:411px;height:40px"></div><div class="t" style="left:17px;top:469px;">Index / data :</div><div class="b" style="left:233px;top:457px;width:121px;height:40px"></div><div class="t" style="left:269px;top:469px;">asis</div><svg class="ic" style="left:335px;top:471px" width="16" height="12" viewBox="0 0 16 12"><path d="M3 3.5L8 8L13 3.5" fill="none" stroke="#d8d8d8" stroke-width="2"/></svg><div class="b" style="left:364px;top:457px;width:172px;height:40px"></div><div class="t" style="left:426px;top:469px;">asis</div><svg class="ic" style="left:516px;top:471px" width="16" height="12" viewBox="0 0 16 12"><path d="M3 3.5L8 8L13 3.5" fill="none" stroke="#d8d8d8" stroke-width="2"/></svg><div class="t" style="left:548px;top:469px;">Csv input :</div><div class="b" style="left:704px;top:457px;width:202px;height:40px"></div><div class="t" style="left:713px;top:469px;"><span style="display:inline-block;width:184px;overflow:hidden">1.0,2.0,,3.0,...</span></div><svg class="ic" style="left:886px;top:471px" width="16" height="12" viewBox="0 0 16 12"><path d="M3 3.5L8 8L13 3.5" fill="none" stroke="#d8d8d8" stroke-width="2"/></svg><div class="t" style="left:918px;top:469px;">Csv output :</div><div class="b" style="left:1086px;top:457px;width:196px;height:40px"></div><div class="t" style="left:1094px;top:469px;"><span style="display:inline-block;width:184px;overflow:hidden">1.0,2.0,,3.0,...</span></div><svg class="ic" style="left:1266px;top:471px" width="16" height="12" viewBox="0 0 16 12"><path d="M3 3.5L8 8L13 3.5" fill="none" stroke="#d8d8d8" stroke-width="2"/></svg><div class="t" style="left:1294px;top:469px;">Verbose (y/n) :</div><div class="cb" style="left:1502px;top:467px"></div><div class="t" style="left:1557px;top:469px;">Strict (y/n) :</div><div class="cb" style="left:1752px;top:467px"></div>

<!-- FILE TYPE -->
<div class="f" style="left:5px;top:524px;width:1914px;height:70px"></div>
<div class="t o" style="left:14px;top:516px">File type</div>
<div class="b" style="left:11px;top:541px;width:56px;height:48px"></div><svg class="ic" style="left:11px;top:541px" width="56" height="48" viewBox="0 0 56 48"><defs><linearGradient id="gtri" x1="0" y1="0" x2="0" y2="1"><stop offset="0" stop-color="#c6e86a"/><stop offset=".5" stop-color="#5fae1e"/><stop offset="1" stop-color="#2f7a0a"/></linearGradient></defs><path d="M14.3 18L28 26.5L14.3 35.2Z" fill="url(#gtri)" stroke="#1f6a10" stroke-width="1"/><path d="M21.2 13H33.3M33.2 20H40.2M33.2 27H39.2M33.2 34H41.2" stroke="#fff" stroke-width="2.4" stroke-linecap="round"/></svg><div class="r" style="left:77px;top:555px"></div><div class="t" style="left:103px;top:557px;">Pre</div><div class="rs" style="left:153px;top:555px"></div><div class="t" style="left:180px;top:557px;">Post</div><div class="sep" style="left:237px;top:541px;height:48px"></div><div class="t" style="left:247px;top:557px;">filter/extension</div><div class="e" style="left:446px;top:545px;width:592px;height:40px"></div><div class="t" style="left:736px;top:560px;">*</div><div class="t" style="left:1057px;top:557px;">.</div><div class="e" style="left:1088px;top:545px;width:76px;height:40px"></div><div class="t" style="left:1108px;top:557px;">csv</div><div class="sep" style="left:1170px;top:541px;height:48px"></div><div class="t" style="left:1180px;top:557px;">Time</div><div class="a" style="left:1235px;top:563px;width:55px;height:4px;background:#7f7f7f"></div><div class="a" style="left:1285px;top:555px;width:20px;height:20px;border-radius:50%;background:#0080ff"></div><svg class="ic" style="left:1314px;top:549px" width="30" height="31" viewBox="0 0 30 31"><defs><linearGradient id="sgb" x1="0" y1="0" x2="0" y2="1"><stop offset="0" stop-color="#a9c6ea"/><stop offset="1" stop-color="#6f9bd6"/></linearGradient></defs><rect x="0.5" y="19" width="6.6" height="10.5" fill="url(#sgb)" stroke="#3b6fc2" stroke-width="1"/><rect x="7.6" y="13" width="6.6" height="16.5" fill="url(#sgb)" stroke="#3b6fc2" stroke-width="1"/><rect x="14.7" y="7.5" width="6.6" height="22.0" fill="url(#sgb)" stroke="#3b6fc2" stroke-width="1"/><rect x="21.799999999999997" y="1.5" width="6.6" height="28.0" fill="url(#sgb)" stroke="#3b6fc2" stroke-width="1"/></svg><div class="sep" style="left:1354px;top:541px;height:48px"></div><div class="t" style="left:1362px;top:557px;">Disks</div><div class="a" style="left:1445px;top:563px;width:55px;height:4px;background:#7f7f7f"></div><div class="a" style="left:1430px;top:555px;width:20px;height:20px;border-radius:50%;background:#0080ff"></div><svg class="ic" style="left:1509px;top:549px" width="30" height="31" viewBox="0 0 30 31"><defs><linearGradient id="sgw" x1="0" y1="0" x2="1" y2="0"><stop offset="0" stop-color="#ffffff"/><stop offset="1" stop-color="#cfcfcf"/></linearGradient></defs><rect x="0.5" y="19" width="6.6" height="10.5" fill="url(#sgw)" stroke="#9a9a9a" stroke-width="1"/><rect x="7.6" y="13" width="6.6" height="16.5" fill="url(#sgw)" stroke="#9a9a9a" stroke-width="1"/><rect x="14.7" y="7.5" width="6.6" height="22.0" fill="url(#sgw)" stroke="#9a9a9a" stroke-width="1"/><rect x="21.799999999999997" y="1.5" width="6.6" height="28.0" fill="url(#sgw)" stroke="#9a9a9a" stroke-width="1"/></svg><div class="sep" style="left:1549px;top:541px;height:48px"></div><div class="rs" style="left:1559px;top:555px"></div><div class="t" style="left:1585px;top:557px;">Csv</div><div class="r" style="left:1635px;top:555px"></div><div class="t" style="left:1662px;top:557px;">Text</div><div class="r" style="left:1723px;top:555px"></div><div class="t" style="left:1750px;top:557px;">Tkfab</div><div class="r" style="left:1823px;top:555px"></div><div class="t" style="left:1849px;top:557px;">Other</div>

<!-- AVAILABLE -->
<div class="f" style="left:5px;top:610px;width:1914px;height:425px"></div>
<div class="t o" style="left:14px;top:602px">Available files on this computer</div>
<div class="a" style="left:9px;top:626px;width:381px;height:28px;border:2px solid #ebe7dc"></div><div class="t" style="left:114px;top:632px;">Navigator tree</div><div class="a" style="left:396px;top:626px;width:1519px;height:28px;border:2px solid #ebe7dc"></div><div class="t" style="left:1071px;top:632px;">Navigator data</div><div class="a" style="left:9px;top:656px;width:381px;height:375px;border:1px solid #6f6f6f;border-radius:5px"></div><div class="a" style="left:396px;top:656px;width:1519px;height:375px;border:1px solid #6f6f6f;border-radius:5px"></div><div class="a" style="left:14px;top:661px;width:371px;height:25px;background:#7a7a7a"></div><div class="a" style="left:400px;top:661px;width:1511px;height:25px;background:#7a7a7a"></div><div class="tv" style="left:108px;top:666px;">Directories</div><div class="tv" style="left:332px;top:666px;">size</div><svg class="ic" style="left:22px;top:696px" width="12" height="14" viewBox="0 0 12 14"><path d="M4 3L8 7L4 11" fill="none" stroke="#eee" stroke-width="1.6"/></svg><div class="tv" style="left:42px;top:693px;">C:/tclsoft/tkfab</div><div class="tv" style="left:348px;top:693px;">3</div><div class="tv" style="left:505px;top:666px;">Tail directory</div><div class="tv" style="left:937px;top:666px;">Name</div><div class="tv" style="left:1315px;top:666px;">Date</div><div class="tv" style="left:1691px;top:666px;">Size</div><div class="tv" style="left:562px;top:693px;">tkfab</div><div class="tv" style="left:783px;top:693px;width:371px;overflow:hidden">clipboard_cr2csv_clipboard_to_fea_</div><div class="tv" style="left:1200px;top:693px;width:205px;text-align:right">8 Jun 2025</div><div class="tv" style="left:1671px;top:693px;">428 bytes</div><div class="tv" style="left:562px;top:723px;">tkfab</div><div class="tv" style="left:783px;top:723px;width:371px;overflow:hidden">clipboard_cr2csv_debug.csv</div><div class="tv" style="left:1200px;top:723px;width:205px;text-align:right">8 Jun 2025</div><div class="tv" style="left:1671px;top:723px;">428 bytes</div><div class="tv" style="left:562px;top:753px;">tkfab</div><div class="tv" style="left:783px;top:753px;width:371px;overflow:hidden">stepAC_1dac2csv_debug_frequency_1c</div><div class="tv" style="left:1200px;top:753px;width:205px;text-align:right">17 Nov 2025</div><div class="tv" style="left:1671px;top:753px;">176 bytes</div>

<!-- STATUS -->
<div class="b" style="left:8px;top:1046px;width:56px;height:41px"></div><svg class="ic" style="left:8px;top:1046px" width="55" height="41" viewBox="0 0 55 41"><path d="M16.8 12L39 24L16.8 36Z" fill="#fff"/></svg><div class="a" style="left:66px;top:1046px;width:1233px;height:41px;border:2px solid #aca597"></div><div class="t" style="left:658px;top:1058px;">....</div><div class="b" style="left:1301px;top:1046px;width:56px;height:41px"></div><svg class="ic" style="left:1301px;top:1046px" width="56" height="41" viewBox="0 0 56 41"><defs><radialGradient id="led" cx="50%" cy="70%" r="60%"><stop offset="0" stop-color="#8cf06a"/><stop offset=".6" stop-color="#1fa80e"/><stop offset="1" stop-color="#0b6a06"/></radialGradient><linearGradient id="ledh" x1="0" y1="0" x2="0" y2="1"><stop offset="0" stop-color="#fff" stop-opacity=".95"/><stop offset="1" stop-color="#fff" stop-opacity="0"/></linearGradient></defs><circle cx="28.2" cy="24" r="13.4" fill="url(#led)" stroke="#0a3a2a" stroke-width="1"/><ellipse cx="28.2" cy="16.5" rx="8" ry="5" fill="url(#ledh)"/></svg><div class="a" style="left:1364px;top:1055px;font:18.5px/24px 'Liberation Sans',sans-serif;color:#fdf9f0;white-space:pre;transform:scaleX(1.1);transform-origin:0 0">19</div><div class="a" style="left:1398px;top:1055px;font:18.5px/24px 'Liberation Sans',sans-serif;color:#fdf9f0;white-space:pre;transform:scaleX(1.09);transform-origin:0 0">Dec</div><div class="a" style="left:1448px;top:1055px;font:18.5px/24px 'Liberation Sans',sans-serif;color:#fdf9f0;white-space:pre;transform:scaleX(1.12);transform-origin:0 0">2025</div><div class="a" style="left:1504px;top:1055px;font:18.5px/24px 'Liberation Sans',sans-serif;color:#fdf9f0;white-space:pre;transform:scaleX(1.13);transform-origin:0 0">00</div><div class="a" style="left:1530.5px;top:1055px;font:18.5px/24px 'Liberation Sans',sans-serif;color:#fdf9f0;white-space:pre;transform:scaleX(1.1);transform-origin:0 0">:</div><div class="a" style="left:1539.5px;top:1055px;font:18.5px/24px 'Liberation Sans',sans-serif;color:#fdf9f0;white-space:pre;transform:scaleX(1.1);transform-origin:0 0">01</div><div class="a" style="left:1565.5px;top:1055px;font:18.5px/24px 'Liberation Sans',sans-serif;color:#fdf9f0;white-space:pre;transform:scaleX(1.1);transform-origin:0 0">:</div><div class="a" style="left:1576.3px;top:1055px;font:18.5px/24px 'Liberation Sans',sans-serif;color:#fdf9f0;white-space:pre;transform:scaleX(1.13);transform-origin:0 0">00</div><div class="b" style="left:1605px;top:1046px;width:56px;height:41px;border-radius:5px"></div><svg class="ic" style="left:1605px;top:1046px" width="56" height="41" viewBox="0 0 56 41"><path d="M13 16.5a2 2 0 0 1 2-2h5l1.6-3.8h8.8l1.6 3.8H41a2 2 0 0 1 2 2V34a2 2 0 0 1-2 2H15a2 2 0 0 1-2-2Z" fill="#fff"/><circle cx="27.8" cy="24.8" r="5.4" fill="none" stroke="#737373" stroke-width="2.2"/></svg><div class="b" style="left:1665px;top:1046px;width:56px;height:41px;border-radius:5px"></div><svg class="ic" style="left:1665px;top:1046px" width="56" height="41" viewBox="0 0 56 41"><path d="M15 17a2 2 0 0 1 2-2h22a2 2 0 0 1 2 2V36H15Z" fill="#fff"/><path d="M23 15v-3a1.5 1.5 0 0 1 1.5-1.5h7A1.5 1.5 0 0 1 33 12v3" fill="none" stroke="#fff" stroke-width="1.8"/><rect x="12" y="8" width="32" height="32" fill="url(#stip)"/></svg><div class="b" style="left:1725px;top:1046px;width:56px;height:41px;border-radius:5px"></div><svg class="ic" style="left:1725px;top:1046px" width="56" height="41" viewBox="0 0 56 41"><rect x="14.9" y="27.9" width="26" height="8" rx="1.2" fill="#fff"/><path d="M27.8 10.8L36.1 19.8H31.3V27.9H24.6V19.8H19.9Z" fill="#fff" stroke="#737373" stroke-width="1.4" paint-order="stroke"/><path d="M27.8 10.8L36.1 19.8H31.3V27.9H24.6V19.8H19.9Z" fill="#fff"/><rect x="33.2" y="32.2" width="1.8" height="1.8" fill="#737373"/><rect x="37.2" y="32.2" width="1.8" height="1.8" fill="#737373"/></svg><div class="b" style="left:1785px;top:1046px;width:56px;height:41px;border-radius:5px"></div><svg class="ic" style="left:1785px;top:1046px" width="56" height="41" viewBox="0 0 56 41"><rect x="14.8" y="26" width="26.2" height="8" rx="1.2" fill="#fff"/><path d="M25 9.9H31V18.6H36L27.9 27.3L19.8 18.6H25Z" fill="#fff" stroke="#737373" stroke-width="1.6" paint-order="stroke"/><path d="M25 9.9H31V18.6H36L27.9 27.3L19.8 18.6H25Z" fill="#fff"/><rect x="33.2" y="30.2" width="1.8" height="1.8" fill="#737373"/><rect x="37.2" y="30.2" width="1.8" height="1.8" fill="#737373"/></svg><div class="b" style="left:1845px;top:1046px;width:56px;height:41px;border-radius:5px"></div><svg class="ic" style="left:1845px;top:1046px" width="56" height="41" viewBox="0 0 56 41"><rect x="11.5" y="13.7" width="32" height="20" rx="10" fill="#fff"/><circle cx="33.7" cy="23.7" r="7.8" fill="#737373"/></svg><svg class="ic" style="left:1900px;top:1068px" width="22" height="22" viewBox="0 0 22 22"><circle cx="16" cy="6" r="1.7" fill="#7a7a7a"/><circle cx="11" cy="11.5" r="1.7" fill="#7a7a7a"/><circle cx="16" cy="11.5" r="1.7" fill="#7a7a7a"/><circle cx="5" cy="17" r="1.7" fill="#7a7a7a"/><circle cx="11" cy="17" r="1.7" fill="#7a7a7a"/><circle cx="16" cy="17" r="1.7" fill="#7a7a7a"/></svg>
</body></html>
